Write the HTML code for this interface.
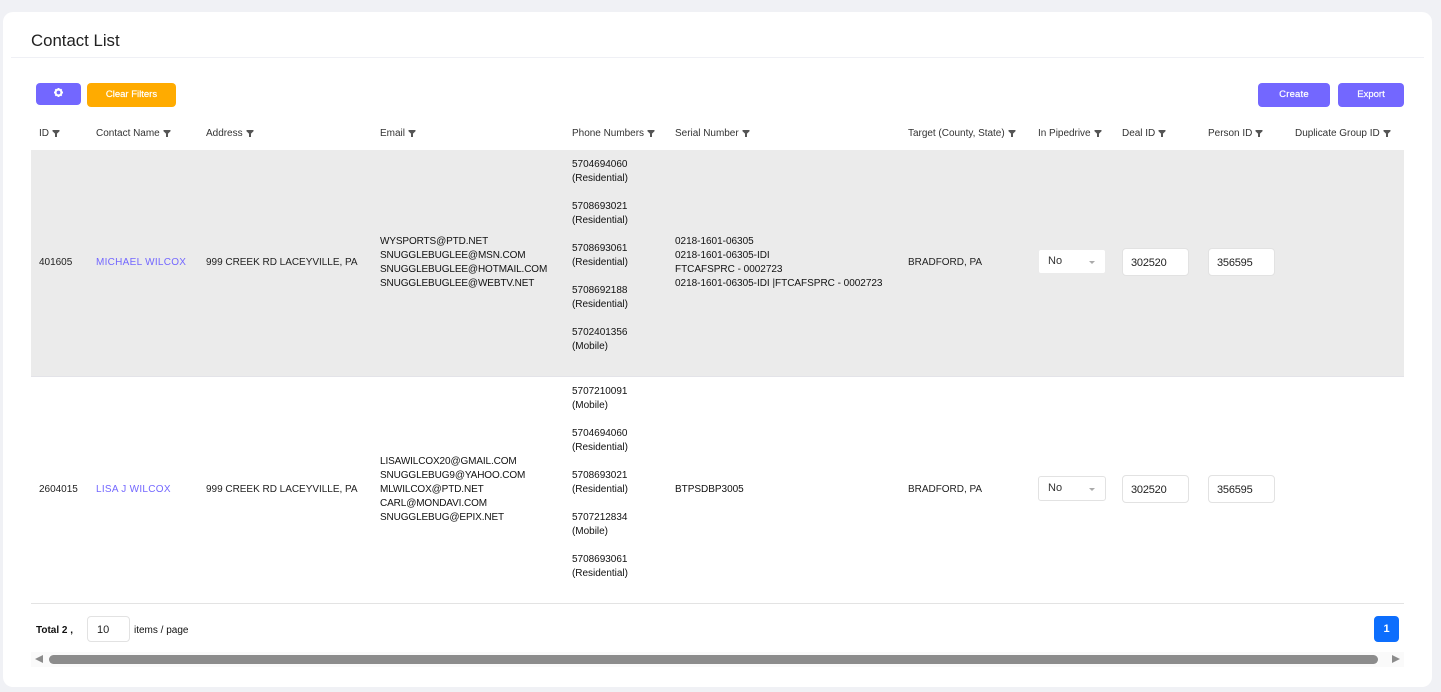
<!DOCTYPE html>
<html><head><meta charset="utf-8"><style>
html,body{margin:0;padding:0}
body{width:1441px;height:692px;background:#f0f1f5;overflow:hidden;position:relative;font-family:"Liberation Sans",sans-serif;color:#222;font-size:10px;letter-spacing:-.02px}
.a{position:absolute;white-space:nowrap}
.l{line-height:14px}
.card{position:absolute;left:3px;top:12px;width:1429px;height:675px;background:#fff;border-radius:10px}
.btn{position:absolute;background:#7367ff;color:#fff;border-radius:4px;text-align:center;font-weight:400;-webkit-text-stroke:.2px #fff}
.th{position:absolute;line-height:12px;color:#333;white-space:nowrap}
.th svg{display:inline-block;width:8px;height:8px;margin-left:3px;vertical-align:-0.5px}
.in{position:absolute;background:#fff;border:1px solid #e2e2e2;border-radius:4px;box-sizing:border-box;font-size:11px;letter-spacing:-.2px;line-height:28px;padding-left:8px;color:#222;width:67px;height:28px}
.sel{position:absolute;background:#fff;border:1px solid #ebebeb;border-radius:3px;width:68px;height:25px;left:1038px;font-size:11px;line-height:23px;letter-spacing:0;padding-left:9px;box-sizing:border-box;color:#333}
.sel i{position:absolute;left:50px;top:11px;border:3.5px solid transparent;border-top:3.5px solid #aaa;border-bottom:0}
.lnk{color:#7367ff;letter-spacing:.28px}
.em{letter-spacing:-.12px;color:#111}
</style></head><body>
<div class="card"></div>
<div class="a" style="left:31px;top:31px;font-size:16.8px;letter-spacing:0;line-height:20px;color:#222">Contact List</div>
<div class="a" style="left:11px;top:57px;width:1413px;height:1px;background:#eff0f5"></div>

<div class="btn" style="left:36px;top:83px;width:45px;height:22px"><svg style="position:absolute;left:18px;top:5px" width="9" height="9" viewBox="0 0 9 9"><circle cx="4.5" cy="4.5" r="3" fill="none" stroke="#fff" stroke-width="2.2"/><g stroke="#fff" stroke-width="1.4"><path d="M4.5 0v2M4.5 7v2M0 4.5h2M7 4.5h2M1.3 1.3l1.3 1.3M6.4 6.4l1.3 1.3M1.3 7.7l1.3-1.3M6.4 2.6l1.3-1.3"/></g></svg></div>
<div class="btn" style="left:87px;top:83px;width:89px;height:24px;background:#ffab00;line-height:24px;letter-spacing:0;font-size:9.5px">Clear Filters</div>
<div class="btn" style="left:1258px;top:83px;width:72px;height:24px;line-height:24px;letter-spacing:.2px;font-size:9.5px">Create</div>
<div class="btn" style="left:1338px;top:83px;width:66px;height:24px;line-height:24px;letter-spacing:0;font-size:9.5px">Export</div>

<svg width="0" height="0" style="position:absolute"><defs><symbol id="f" viewBox="0 0 8 8"><path d="M.5 1h7v1.2L5 4.6V8H3V4.6L.5 2.2z" fill="#555"/></symbol></defs></svg>
<div class="th" style="left:39px;top:128px">ID<svg><use href="#f"/></svg></div>
<div class="th" style="left:96px;top:128px">Contact Name<svg><use href="#f"/></svg></div>
<div class="th" style="left:206px;top:128px">Address<svg><use href="#f"/></svg></div>
<div class="th" style="left:380px;top:128px">Email<svg><use href="#f"/></svg></div>
<div class="th" style="left:572px;top:128px">Phone Numbers<svg><use href="#f"/></svg></div>
<div class="th" style="left:675px;top:128px">Serial Number<svg><use href="#f"/></svg></div>
<div class="th" style="left:908px;top:128px">Target (County, State)<svg><use href="#f"/></svg></div>
<div class="th" style="left:1038px;top:128px">In Pipedrive<svg><use href="#f"/></svg></div>
<div class="th" style="left:1122px;top:128px">Deal ID<svg><use href="#f"/></svg></div>
<div class="th" style="left:1208px;top:128px">Person ID<svg><use href="#f"/></svg></div>
<div class="th" style="left:1295px;top:128px">Duplicate Group ID<svg><use href="#f"/></svg></div>

<div class="a" style="left:31px;top:150px;width:1373px;height:226px;background:#ebebeb"></div>
<div class="a" style="left:31px;top:376px;width:1373px;height:1px;background:#e3e3e8"></div>
<div class="a" style="left:31px;top:603px;width:1373px;height:1px;background:#e3e3e3"></div>

<div class="a l" style="left:39px;top:256px">401605</div>
<div class="a l lnk" style="left:96px;top:256px">MICHAEL WILCOX</div>
<div class="a l" style="left:206px;top:256px">999 CREEK RD LACEYVILLE, PA</div>
<div class="a l em" style="left:380px;top:235px">WYSPORTS@PTD.NET<br>SNUGGLEBUGLEE@MSN.COM<br>SNUGGLEBUGLEE@HOTMAIL.COM<br>SNUGGLEBUGLEE@WEBTV.NET</div>
<div class="a l" style="left:572px;top:158px;color:#111">5704694060<br>(Residential)<br><br>5708693021<br>(Residential)<br><br>5708693061<br>(Residential)<br><br>5708692188<br>(Residential)<br><br>5702401356<br>(Mobile)</div>
<div class="a l" style="left:675px;top:235px;color:#111">0218-1601-06305<br>0218-1601-06305-IDI<br>FTCAFSPRC - 0002723<br>0218-1601-06305-IDI |FTCAFSPRC - 0002723</div>
<div class="a l" style="left:908px;top:256px">BRADFORD, PA</div>
<div class="sel" style="top:249px">No<i></i></div>
<div class="in" style="left:1122px;top:248px">302520</div>
<div class="in" style="left:1208px;top:248px">356595</div>

<div class="a l" style="left:39px;top:483px">2604015</div>
<div class="a l lnk" style="left:96px;top:483px">LISA J WILCOX</div>
<div class="a l" style="left:206px;top:483px">999 CREEK RD LACEYVILLE, PA</div>
<div class="a l em" style="left:380px;top:455px">LISAWILCOX20@GMAIL.COM<br>SNUGGLEBUG9@YAHOO.COM<br>MLWILCOX@PTD.NET<br>CARL@MONDAVI.COM<br>SNUGGLEBUG@EPIX.NET</div>
<div class="a l" style="left:572px;top:385px;color:#111">5707210091<br>(Mobile)<br><br>5704694060<br>(Residential)<br><br>5708693021<br>(Residential)<br><br>5707212834<br>(Mobile)<br><br>5708693061<br>(Residential)</div>
<div class="a l" style="left:675px;top:483px;color:#111">BTPSDBP3005</div>
<div class="a l" style="left:908px;top:483px">BRADFORD, PA</div>
<div class="sel" style="top:476px;border-color:#e2e2e2">No<i></i></div>
<div class="in" style="left:1122px;top:475px">302520</div>
<div class="in" style="left:1208px;top:475px">356595</div>

<div class="a l" style="left:36px;top:624px;font-weight:700;letter-spacing:0;color:#111">Total 2 ,</div>
<div class="in" style="left:87px;top:616px;width:43px;height:26px;line-height:26px;padding-left:9px;font-size:11px;letter-spacing:0">10</div>
<div class="a l" style="left:134px;top:624px;color:#111;letter-spacing:0">items / page</div>
<div class="a" style="left:1374px;top:616px;width:25px;height:26px;background:#0d6efd;border-radius:4px;color:#fff;text-align:center;line-height:26px;font-weight:700;font-size:11px;letter-spacing:0">1</div>

<div class="a" style="left:31px;top:652px;width:1373px;height:15px;background:#fafafa"></div>
<div class="a" style="left:49px;top:655px;width:1329px;height:9px;background:#8c8c8c;border-radius:5px"></div>
<div class="a" style="left:35px;top:655px;width:0;height:0;border:4.5px solid transparent;border-left:0;border-right:8px solid #8c8c8c"></div>
<div class="a" style="left:1392px;top:655px;width:0;height:0;border:4.5px solid transparent;border-right:0;border-left:8px solid #8c8c8c"></div>
</body></html>
